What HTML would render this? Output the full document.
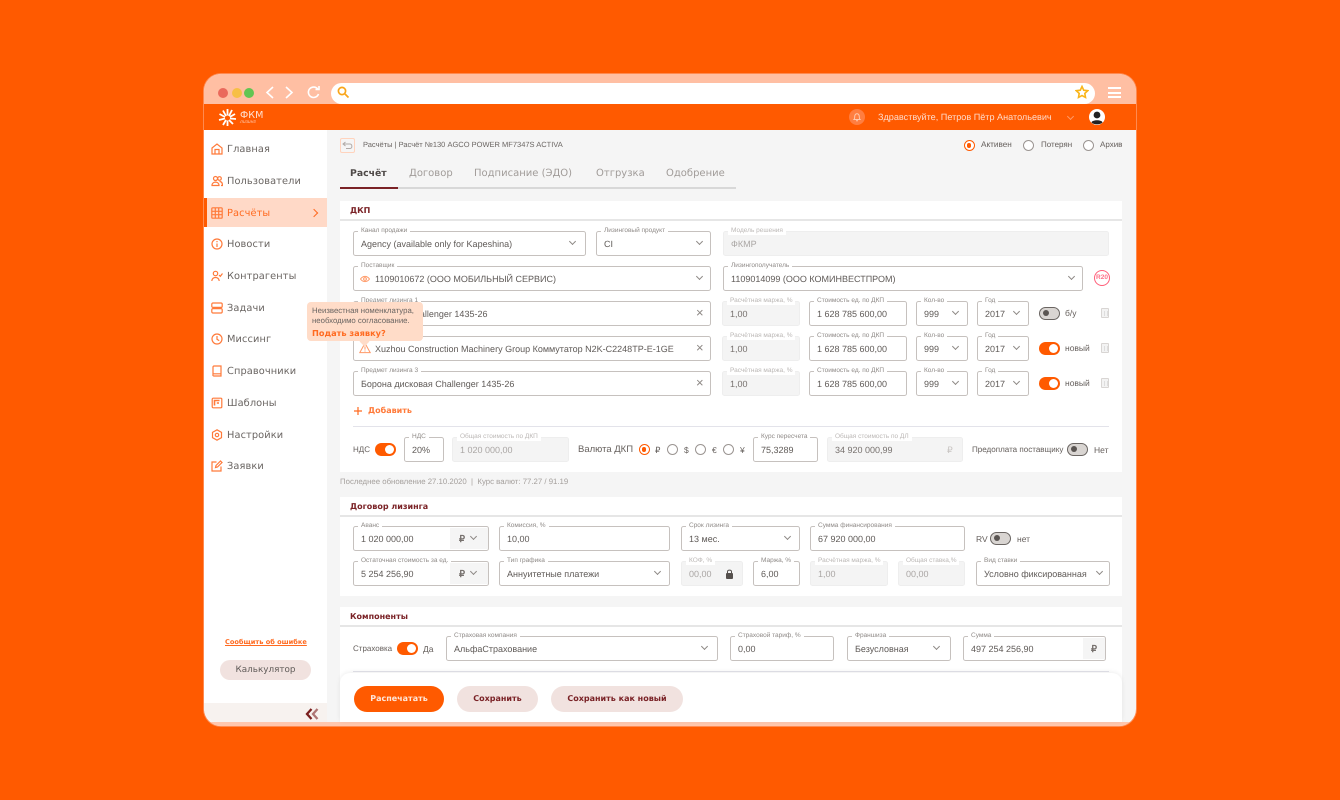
<!DOCTYPE html>
<html lang="ru"><head><meta charset="utf-8"><title>ФКМ Лизинг</title>
<style>
*{box-sizing:border-box}
html,body{margin:0;padding:0}
body{width:1340px;height:800px;background:#ff5a00;overflow:hidden;position:relative;font-family:"Liberation Sans","Noto Sans CJK SC",sans-serif;color:#66605d;text-rendering:geometricPrecision}
#w{position:absolute;left:0;top:0;width:1340px;height:800px;filter:blur(.3px)}
.a,.f,.n,.t,.s,.tg,.r{position:absolute}
.t{white-space:nowrap;line-height:12px}
.n{left:227px;font:9.8px/12px "DejaVu Sans",sans-serif;color:#6a6562;white-space:nowrap;letter-spacing:.1px;margin-top:1px}
.ic{position:absolute;left:211px;width:12px;height:12px;fill:none;stroke:#ff7a3a;stroke-width:1.2}
.h{position:absolute;left:350px;font:bold 8px/12px "DejaVu Sans",sans-serif;color:#7a2226;white-space:nowrap}
.p{position:absolute;background:#fff;left:340px;width:782px}
.l{position:absolute;left:340px;width:782px;height:1.5px;background:#e6e6e6}
.f{height:25px;border:1.4px solid #c6c1be;border-radius:2.5px;background:#fff;font-size:9px;line-height:24px;padding-left:7px;color:#5f5a57;white-space:nowrap}
.f b{position:absolute;left:4px;top:-5px;height:8px;background:#fff;padding:0 3px;font:normal 6.5px/8px "Liberation Sans",sans-serif;color:#8e8986;white-space:nowrap}
.f.d{background:#f4f4f4;border-color:#eeeeee;color:#aaa6a4}
.f.d b{color:#bbb7b5}
.c{position:absolute;top:8px;width:5px;height:5px;border-right:1px solid #8d8885;border-bottom:1px solid #8d8885;transform:rotate(45deg)}
.x{position:absolute;left:342px;top:0;font-size:13px;color:#8d8885}
.tg{width:21px;height:13px;border-radius:7px;background:#ff5a00}
.tg:after{content:"";position:absolute;right:2px;top:2px;width:9px;height:9px;border-radius:50%;background:#fff}
.tg.o{background:#d9d5d2;border:1.3px solid #6a6562}
.tg.o:after{left:3px;right:auto;top:2.2px;width:6px;height:6px;background:#5a5552}
.r{width:11px;height:11px;border-radius:50%;border:1px solid #9b9592;background:#fff}
.r.on{border:1.2px solid #ff5a00}
.r.on:after{content:"";position:absolute;left:2.2px;top:2.2px;width:4.4px;height:4.4px;border-radius:50%;background:#ff5a00}
.cur{position:absolute;top:1px;bottom:1px;right:1px;background:#f5f5f5;font-size:9.5px;font-weight:bold;color:#77716e}
.btn{position:absolute;top:686px;height:26px;border-radius:13px;background:#f1e2df;color:#7a2226;font:bold 8px/26px "DejaVu Sans",sans-serif;text-align:center;white-space:nowrap}
.tr{position:absolute;left:1101px;width:8px;height:10px;border:1px solid #d8d5d3;border-radius:1px;background:#f3f3f3}
.tr:after{content:"";position:absolute;left:2px;top:1.5px;width:2px;height:5px;border-left:1px solid #ddd;border-right:1px solid #ddd}
</style></head><body><div id="w">

<!-- window -->
<div class="a" style="left:204px;top:74px;width:932px;height:652px;border-radius:17px;background:#f5f5f5;overflow:hidden;box-shadow:0 0 0 1px #ff8a50">
  <div class="a" style="left:0;top:0;width:932px;height:30px;background:#ffbfa3"></div>
  <div class="a" style="left:0;top:30px;width:932px;height:26px;background:#ff5a00"></div>
  <div class="a" style="left:0;top:648px;width:932px;height:4px;background:#ffc6ad"></div>
</div>

<!-- browser chrome -->
<div class="a" style="left:218px;top:88px;width:10px;height:10px;border-radius:50%;background:#ea6a5c"></div>
<div class="a" style="left:232px;top:88px;width:10px;height:10px;border-radius:50%;background:#f7bf45"></div>
<div class="a" style="left:244px;top:88px;width:10px;height:10px;border-radius:50%;background:#62c552"></div>
<svg class="a" style="left:262px;top:84px" width="60" height="17" fill="none" stroke="#fff" stroke-width="1.6"><path d="M11 3L5 8.5L11 14M24 3L30 8.5L24 14"/><path d="M56 5.5A5.2 5.2 0 1 0 56.5 10" /><path d="M53.5 5.5H57V2" /></svg>
<div class="a" style="left:331px;top:83px;width:764px;height:21px;background:#fff;border-radius:11px 11px 11px 11px"></div>
<svg class="a" style="left:337px;top:86px" width="13" height="13" fill="none" stroke="#f9a51a" stroke-width="1.7"><circle cx="5" cy="5" r="3.6"/><path d="M8 8L11.5 11.5"/></svg>
<svg class="a" style="left:1075px;top:85px" width="14" height="14" fill="#fff" stroke="#f9b51a" stroke-width="1.6"><path d="M7 1.5L8.7 5.2L12.7 5.7L9.8 8.4L10.5 12.4L7 10.5L3.5 12.4L4.2 8.4L1.3 5.7L5.3 5.2Z"/></svg>
<div class="a" style="left:1108px;top:87px;width:13px;height:2px;background:#fff"></div>
<div class="a" style="left:1108px;top:91.5px;width:13px;height:2px;background:#fff"></div>
<div class="a" style="left:1108px;top:96px;width:13px;height:2px;background:#fff"></div>

<!-- header -->
<svg class="a" style="left:218px;top:108px" width="19" height="19" stroke="#fff" stroke-width="1.8" fill="none"><path d="M9.5 7.5V1M11 8L14 2M11.8 9L17 6M12 10.5L18 11M11 12L15 16M9.5 12.5V18M8 12L5 17M7 10.5L1 12M7 9L1.5 6M8 8L5 2.5"/></svg>
<div class="t" style="left:240px;top:110px;font:9.6px/11px 'DejaVu Sans',sans-serif;color:#ffe3d4">ФКМ</div>
<div class="t" style="left:240px;top:119px;font:italic 5px/6px 'Liberation Sans',sans-serif;color:#ffc4a6">лизинг</div>
<div class="a" style="left:849px;top:109px;width:16px;height:16px;border-radius:50%;background:#ff7e40"></div>
<svg class="a" style="left:852px;top:112px" width="10" height="10" fill="none" stroke="#ffc9ad" stroke-width="1"><path d="M2 7.5C3 6.5 2.5 5 2.8 3.8C3.5 1 6.5 1 7.2 3.8C7.5 5 7 6.5 8 7.5ZM4 8.8H6"/></svg>
<div class="t" style="left:878px;top:111px;font-size:9.1px;color:#ffdccb">Здравствуйте, Петров Пётр Анатольевич</div>
<div class="a" style="left:1068px;top:114px;width:5px;height:5px;border-right:1px solid #ff9a68;border-bottom:1px solid #ff9a68;transform:rotate(45deg)"></div>
<svg class="a" style="left:1089px;top:109px" width="16" height="16"><circle cx="8" cy="8" r="8" fill="#fff"/><circle cx="8" cy="6" r="3.4" fill="#222"/><path d="M2.5 13.5C3 10.5 13 10.5 13.5 13.5C11 16 5 16 2.5 13.5Z" fill="#222"/></svg>

<!-- sidebar -->
<div class="a" style="left:204px;top:130px;width:123px;height:592px;background:#fff;border-radius:0 0 0 14px;overflow:hidden">
  <div class="a" style="left:0;top:573px;width:123px;height:19px;background:#f7f2ef"></div>
</div>
<div class="a" style="left:204px;top:198px;width:123px;height:29px;background:#ffd9c7"></div>
<div class="a" style="left:204px;top:198px;width:3px;height:29px;background:#ff5a00"></div>

<svg class="ic" style="top:143px" viewBox="0 0 12 12"><path d="M1 5L6 1L11 5V11H1ZM4 11V6.5H8V11"/></svg>
<div class="n" style="top:143px">Главная</div>
<svg class="ic" style="top:175px" viewBox="0 0 12 12"><circle cx="4.5" cy="3.5" r="2"/><circle cx="8.5" cy="3.5" r="1.8"/><path d="M1 10.5C1 6 8 6 8 10.5ZM8.5 6.5C10.5 6.5 11.5 8 11.5 10.5H10"/></svg>
<div class="n" style="top:175px">Пользователи</div>
<svg class="ic" style="top:207px" viewBox="0 0 12 12"><rect x=".8" y=".8" width="10.4" height="10.4" rx="1"/><path d="M.8 4.3H11.2M.8 7.7H11.2M4.3.8V11.2M7.7.8V11.2"/></svg>
<div class="n" style="top:207px;color:#ff6a20">Расчёты</div>
<div class="a" style="left:311px;top:210px;width:6px;height:6px;border-top:1.2px solid #ff6a20;border-right:1.2px solid #ff6a20;transform:rotate(45deg)"></div>
<svg class="ic" style="top:238px" viewBox="0 0 12 12"><circle cx="6" cy="6" r="5"/><path d="M6 5.5V9M6 3V4.2"/></svg>
<div class="n" style="top:238px">Новости</div>
<svg class="ic" style="top:270px" viewBox="0 0 12 12"><circle cx="4.5" cy="3.5" r="2.2"/><path d="M.8 11C.8 6.3 8.2 6.3 8.2 11M8 5L9.3 6.3L11.5 3.5"/></svg>
<div class="n" style="top:270px">Контрагенты</div>
<svg class="ic" style="top:302px" viewBox="0 0 12 12"><rect x=".8" y="1" width="10.4" height="4.4" rx="1.2"/><rect x=".8" y="6.6" width="10.4" height="4.4" rx="1.2"/></svg>
<div class="n" style="top:302px">Задачи</div>
<svg class="ic" style="top:333px" viewBox="0 0 12 12"><circle cx="6" cy="6" r="5"/><path d="M6 3V6.3L8.2 7.6"/></svg>
<div class="n" style="top:333px">Миссинг</div>
<svg class="ic" style="top:365px" viewBox="0 0 12 12"><path d="M2 9.5V2A1 1 0 0 1 3 1H10V11H3A1 1 0 0 1 2 9.5ZM2.5 8.8H10"/></svg>
<div class="n" style="top:365px">Справочники</div>
<svg class="ic" style="top:397px" viewBox="0 0 12 12"><rect x="1.2" y="1.2" width="9.6" height="9.6" rx="1"/><path d="M3.5 8.5V3.5H8.5M5.8 6H8" stroke-width="1.6"/></svg>
<div class="n" style="top:397px">Шаблоны</div>
<svg class="ic" style="top:429px" viewBox="0 0 12 12"><path d="M6 .8L10.5 3.4V8.6L6 11.2L1.5 8.6V3.4Z"/><circle cx="6" cy="6" r="1.7"/></svg>
<div class="n" style="top:429px">Настройки</div>
<svg class="ic" style="top:460px" viewBox="0 0 12 12"><path d="M10 6.5V11H1V2H5.5M4.5 7.5L5 5.5L9.5 1L11 2.5L6.5 7Z"/></svg>
<div class="n" style="top:460px">Заявки</div>

<div class="t" style="left:225px;top:637px;font:bold 6.6px/11px 'DejaVu Sans',sans-serif;color:#ff6a20;text-decoration:underline">Сообщить об ошибке</div>
<div class="a" style="left:220px;top:660px;width:91px;height:20px;border-radius:10px;background:#f1e2df;font:8.8px/20px 'DejaVu Sans',sans-serif;color:#5f5a57;text-align:center">Калькулятор</div>
<svg class="a" style="left:305px;top:708px" width="15" height="12" fill="none" stroke-width="2.3"><path d="M6.5 1L2 6L6.5 11" stroke="#7a1f1f"/><path d="M12.5 1L8 6L12.5 11" stroke="#ae7575"/></svg>

<!-- breadcrumb -->
<div class="a" style="left:340px;top:138px;width:15px;height:15px;border:1px solid #ffd3bd;border-radius:2px"></div>
<svg class="a" style="left:342px;top:141px" width="11" height="9" fill="none" stroke="#b0aaa7"><path d="M3.5 1L1 3L3.5 5M1 3H8C10.5 3 10.5 7.5 8 7.5H4"/></svg>
<div class="t" style="left:363px;top:139px;font-size:7.5px;color:#6a6562">Расчёты | Расчёт №130 AGCO POWER MF7347S ACTIVA</div>

<div class="r on" style="left:963.5px;top:140px"></div><div class="t" style="left:981px;top:139px;font-size:8.2px">Активен</div>
<div class="r" style="left:1023px;top:140px"></div><div class="t" style="left:1041px;top:139px;font-size:8px">Потерян</div>
<div class="r" style="left:1083px;top:140px"></div><div class="t" style="left:1100px;top:139px;font-size:8px">Архив</div>

<!-- tabs -->
<div class="a" style="left:340px;top:187px;width:396px;height:1.5px;background:#d8d8d8"></div>
<div class="a" style="left:340px;top:186.5px;width:58px;height:2px;background:#7a2226"></div>
<div class="t" style="left:350px;top:168px;font:bold 9.3px/12px 'DejaVu Sans',sans-serif;color:#4e4947">Расчёт</div>
<div class="t" style="left:409px;top:168px;font:10px/12px 'DejaVu Sans',sans-serif;color:#a19c99">Договор</div>
<div class="t" style="left:474px;top:168px;font:10px/12px 'DejaVu Sans',sans-serif;color:#a19c99">Подписание (ЭДО)</div>
<div class="t" style="left:596px;top:168px;font:10px/12px 'DejaVu Sans',sans-serif;color:#a19c99">Отгрузка</div>
<div class="t" style="left:666px;top:168px;font:10px/12px 'DejaVu Sans',sans-serif;color:#a19c99">Одобрение</div>

<!-- DKP -->
<div class="p" style="top:201px;height:271px"></div>
<div class="l" style="top:219px"></div>
<div class="h" style="top:205px">ДКП</div>

<div class="f" style="left:353px;top:231px;width:233px"><b>Канал продажи</b>Agency (available only for Kapeshina)<i class="c" style="left:216px;top:7px"></i></div>
<div class="f" style="left:596px;top:231px;width:115px"><b>Лизинговый продукт</b>CI<i class="c" style="left:100px;top:7px"></i></div>
<div class="f d" style="left:723px;top:231px;width:386px"><b>Модель решения</b>ФКМР</div>

<div class="f" style="left:353px;top:266px;width:358px;padding-left:21px"><b>Поставщик</b>1109010672 (ООО МОБИЛЬНЫЙ СЕРВИС)<i class="c" style="left:343px;top:7px"></i></div>
<svg class="a" style="left:360px;top:275px" width="10" height="8" fill="none" stroke="#ff9a68"><path d="M.5 4C3 .5 7 .5 9.5 4C7 7.5 3 7.5 .5 4Z"/><circle cx="5" cy="4" r="1.4"/></svg>
<div class="f" style="left:723px;top:266px;width:360px"><b>Лизингополучатель</b>1109014099 (ООО КОМИНВЕСТПРОМ)<i class="c" style="left:345px;top:7px"></i></div>
<div class="a" style="left:1094px;top:270px;width:16px;height:16px;border:1px solid #ff5f7a;border-radius:50%;font:bold 6.5px/14px 'Liberation Sans',sans-serif;color:#ff7088;text-align:center">R20</div>

<div class="f" style="left:353px;top:301px;width:358px;padding-left:21px"><b>Предмет лизинга 1</b>Борона Challenger 1435-26<span class="x" style="line-height:22px">×</span></div>
<div class="f" style="left:353px;top:336px;width:358px;padding-left:21px"><b>Предмет лизинга 2</b>Xuzhou Construction Machinery Group Коммутатор N2K-C2248TP-E-1GE<span class="x" style="line-height:22px">×</span></div>
<svg class="a" style="left:359px;top:342px" width="12" height="12" fill="none" stroke="#ff9a68"><path d="M6 1.2L11.2 10.6H.8ZM6 4.5V7.6M6 8.5V9.5"/></svg>
<div class="f" style="left:353px;top:371px;width:358px"><b>Предмет лизинга 3</b>Борона дисковая Challenger 1435-26<span class="x" style="line-height:22px">×</span></div>

<!-- rows -->
<div class="f d" style="left:722px;top:301px;width:78px;color:#77716e"><b>Расчётная маржа, %</b>1,00</div>
<div class="f" style="left:809px;top:301px;width:98px"><b>Стоимость ед. по ДКП</b>1 628 785 600,00</div>
<div class="f" style="left:916px;top:301px;width:52px"><b>Кол-во</b>999<i class="c" style="left:36px;top:7px"></i></div>
<div class="f" style="left:977px;top:301px;width:52px"><b>Год</b>2017<i class="c" style="left:36px;top:7px"></i></div>
<div class="tg o" style="left:1039px;top:306.5px"></div><div class="t" style="left:1065px;top:307px;font-size:8.5px">б/у</div>
<div class="tr" style="top:308px"></div>

<div class="f d" style="left:722px;top:336px;width:78px;color:#77716e"><b>Расчётная маржа, %</b>1,00</div>
<div class="f" style="left:809px;top:336px;width:98px"><b>Стоимость ед. по ДКП</b>1 628 785 600,00</div>
<div class="f" style="left:916px;top:336px;width:52px"><b>Кол-во</b>999<i class="c" style="left:36px;top:7px"></i></div>
<div class="f" style="left:977px;top:336px;width:52px"><b>Год</b>2017<i class="c" style="left:36px;top:7px"></i></div>
<div class="tg" style="left:1039px;top:341.5px"></div><div class="t" style="left:1065px;top:342px;font-size:8.5px">новый</div>
<div class="tr" style="top:343px"></div>

<div class="f d" style="left:722px;top:371px;width:78px;color:#77716e"><b>Расчётная маржа, %</b>1,00</div>
<div class="f" style="left:809px;top:371px;width:98px"><b>Стоимость ед. по ДКП</b>1 628 785 600,00</div>
<div class="f" style="left:916px;top:371px;width:52px"><b>Кол-во</b>999<i class="c" style="left:36px;top:7px"></i></div>
<div class="f" style="left:977px;top:371px;width:52px"><b>Год</b>2017<i class="c" style="left:36px;top:7px"></i></div>
<div class="tg" style="left:1039px;top:376.5px"></div><div class="t" style="left:1065px;top:377px;font-size:8.5px">новый</div>
<div class="tr" style="top:378px"></div>

<svg class="a" style="left:353px;top:406px" width="10" height="10" stroke="#ff6a20" stroke-width="1.2"><path d="M5 1V9M1 5H9"/></svg>
<div class="t" style="left:368px;top:404.5px;font:bold 8px/12px 'DejaVu Sans',sans-serif;color:#ff7a3a">Добавить</div>
<div class="a" style="left:353px;top:426px;width:756px;height:1px;background:#e3e3ea"></div>

<div class="t" style="left:353px;top:443.5px;font-size:8px">НДС</div>
<div class="tg" style="left:375px;top:443px"></div>
<div class="f" style="left:404px;top:437px;width:40px"><b>НДС</b>20%</div>
<div class="f d" style="left:452px;top:437px;width:117px"><b>Общая стоимость по ДКП</b>1 020 000,00</div>
<div class="t" style="left:578px;top:443.5px;font-size:9.5px">Валюта ДКП</div>
<div class="r on" style="left:638.5px;top:444px"></div><div class="t" style="left:655px;top:444px;font-size:8.5px">₽</div>
<div class="r" style="left:666.5px;top:444px"></div><div class="t" style="left:684px;top:444px;font-size:8.5px">$</div>
<div class="r" style="left:694.5px;top:444px"></div><div class="t" style="left:712px;top:444px;font-size:8.5px">€</div>
<div class="r" style="left:722.5px;top:444px"></div><div class="t" style="left:740px;top:444px;font-size:8.5px">¥</div>
<div class="f" style="left:753px;top:437px;width:65px"><b>Курс пересчета</b>75,3289</div>
<div class="f d" style="left:827px;top:437px;width:136px;color:#77716e"><b>Общая стоимость по ДЛ</b>34 920 000,99<span class="a" style="left:119px;top:0;color:#c8c4c2;font-size:9px">₽</span></div>
<div class="t" style="left:972px;top:443.5px;font-size:8.05px">Предоплата поставщику</div>
<div class="tg o" style="left:1067px;top:443px"></div>
<div class="t" style="left:1094px;top:443.5px;font-size:8.5px">Нет</div>

<div class="t" style="left:340px;top:475.5px;font-size:7.8px;color:#a5a09d">Последнее обновление 27.10.2020 &nbsp;|&nbsp; Курс валют: 77.27 / 91.19</div>

<!-- lease -->
<div class="p" style="top:497px;height:99px"></div>
<div class="l" style="top:515px"></div>
<div class="h" style="top:501px">Договор лизинга</div>

<div class="f" style="left:353px;top:526px;width:136px"><b>Аванс</b>1 020 000,00<span class="cur" style="left:96px;width:38px;padding-left:9px">₽<i class="c" style="left:21px;top:6px"></i></span></div>
<div class="f" style="left:499px;top:526px;width:171px"><b>Комиссия, %</b>10,00</div>
<div class="f" style="left:681px;top:526px;width:119px"><b>Срок лизинга</b>13 мес.<i class="c" style="left:103px;top:7px"></i></div>
<div class="f" style="left:810px;top:526px;width:155px"><b>Сумма финансирования</b>67 920 000,00</div>
<div class="t" style="left:976px;top:532.5px;font-size:8.5px">RV</div>
<div class="tg o" style="left:990px;top:532px"></div>
<div class="t" style="left:1017px;top:532.5px;font-size:8.5px">нет</div>

<div class="f" style="left:353px;top:561px;width:136px"><b>Остаточная стоимость за ед.</b>5 254 256,90<span class="cur" style="left:96px;width:38px;padding-left:9px">₽<i class="c" style="left:21px;top:6px"></i></span></div>
<div class="f" style="left:499px;top:561px;width:171px"><b>Тип графика</b>Аннуитетные платежи<i class="c" style="left:155px;top:7px"></i></div>
<div class="f d" style="left:681px;top:561px;width:62px"><b>КОФ, %</b>00,00</div>
<svg class="a" style="left:725px;top:569px" width="9" height="10"><path d="M2.5 4V2.8C2.5.6 6.5.6 6.5 2.8V4" fill="none" stroke="#55504d"/><rect x="1" y="4" width="7" height="6" rx="1" fill="#55504d"/></svg>
<div class="f" style="left:753px;top:561px;width:47px"><b>Маржа, %</b>6,00</div>
<div class="f d" style="left:810px;top:561px;width:78px"><b>Расчётная маржа, %</b>1,00</div>
<div class="f d" style="left:898px;top:561px;width:67px"><b>Общая ставка,%</b>00,00</div>
<div class="f" style="left:976px;top:561px;width:134px"><b>Вид ставки</b>Условно фиксированная<i class="c" style="left:120px;top:7px"></i></div>

<!-- components -->
<div class="p" style="top:607px;height:115px"></div>
<div class="l" style="top:625px"></div>
<div class="h" style="top:611px">Компоненты</div>
<div class="t" style="left:353px;top:642.5px;font-size:8px">Страховка</div>
<div class="tg" style="left:397px;top:642px"></div>
<div class="t" style="left:423px;top:642.5px;font-size:8.5px">Да</div>
<div class="f" style="left:446px;top:636px;width:272px"><b>Страховая компания</b>АльфаСтрахование<i class="c" style="left:255px;top:7px"></i></div>
<div class="f" style="left:730px;top:636px;width:104px"><b>Страховой тариф, %</b>0,00</div>
<div class="f" style="left:847px;top:636px;width:104px"><b>Франшиза</b>Безусловная<i class="c" style="left:86px;top:7px"></i></div>
<div class="f" style="left:963px;top:636px;width:143px"><b>Сумма</b>497 254 256,90<span class="cur" style="left:119px;width:22px;text-align:center">₽</span></div>
<div class="a" style="left:353px;top:671px;width:756px;height:1px;background:#e3e3ea"></div>

<div class="a" style="left:340px;top:673px;width:782px;height:49px;background:#fff;border-radius:10px 10px 0 0;box-shadow:0 -1px 5px rgba(0,0,0,.07)"></div>
<div class="btn" style="left:354px;width:90px;background:#ff5a00;color:#ffe7da">Распечатать</div>
<div class="btn" style="left:457px;width:81px">Сохранить</div>
<div class="btn" style="left:551px;width:132px">Сохранить как новый</div>

<!-- tooltip -->
<div class="a" style="left:307px;top:302px;width:116px;height:39px;background:#ffdcc8;border-radius:4px"></div>
<div class="a" style="left:361px;top:338px;width:7px;height:7px;background:#ffdcc8;transform:rotate(45deg)"></div>
<div class="t" style="left:312px;top:306px;font-size:7.8px;line-height:9.5px;color:#6a6562">Неизвестная номенклатура,<br>необходимо согласование.</div>
<div class="t" style="left:312px;top:326.5px;font:bold 8.2px/12px 'DejaVu Sans',sans-serif;color:#ff6a20">Подать заявку?</div>

</div></body></html>
